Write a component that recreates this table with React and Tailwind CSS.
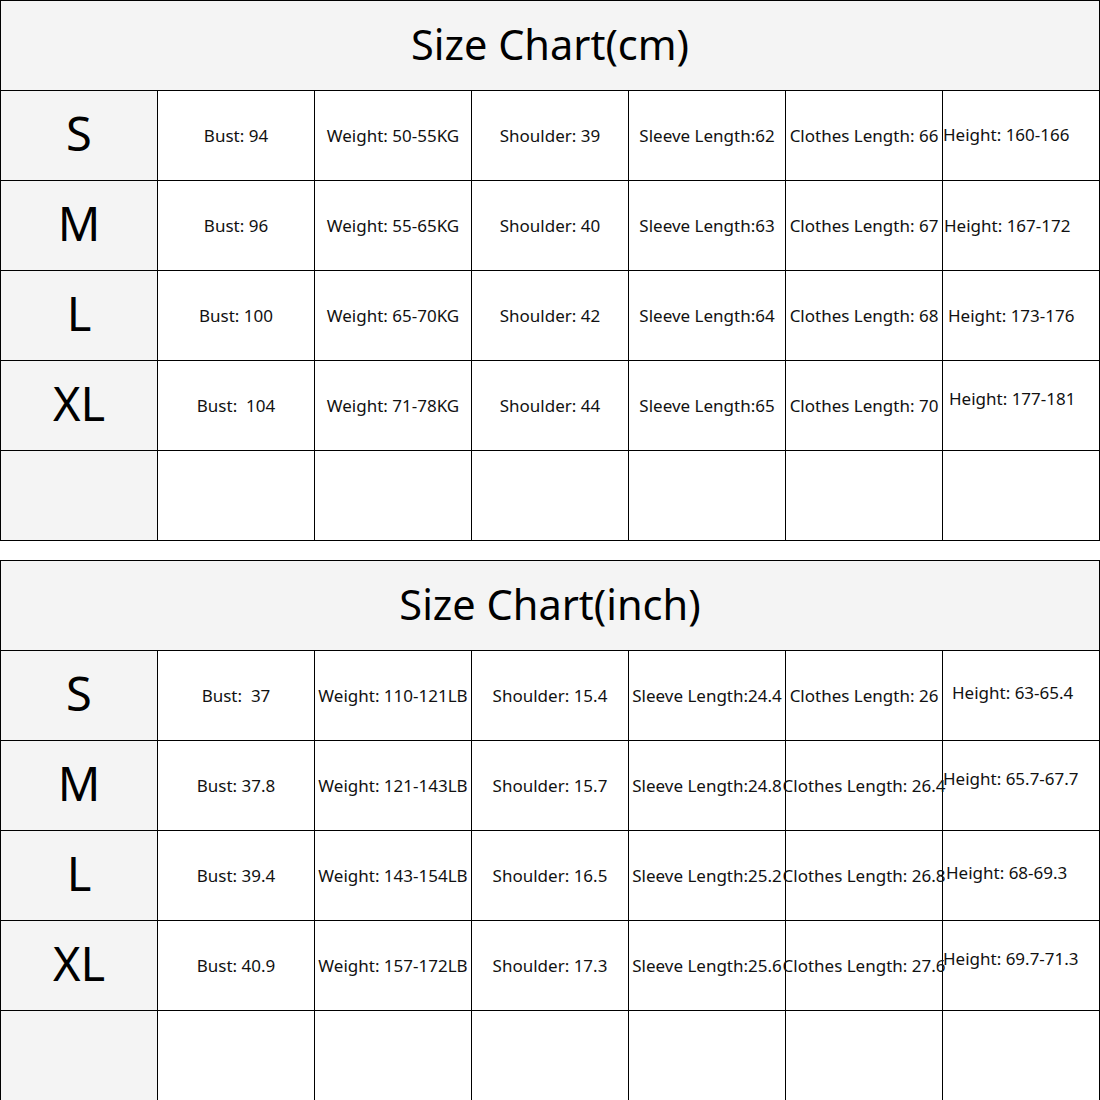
import React from 'react';

const cmRows = [
  { size: 'S', cells: ['Bust: 94', 'Weight: 50-55KG', 'Shoulder: 39', 'Sleeve Length:62', 'Clothes Length: 66'], height: 'Height: 160-166', hl: 'pl-0', ht: '-mt-[2px]' },
  { size: 'M', cells: ['Bust: 96', 'Weight: 55-65KG', 'Shoulder: 40', 'Sleeve Length:63', 'Clothes Length: 67'], height: 'Height: 167-172', hl: 'pl-[1px]', ht: 'mt-0' },
  { size: 'L', cells: ['Bust: 100', 'Weight: 65-70KG', 'Shoulder: 42', 'Sleeve Length:64', 'Clothes Length: 68'], height: 'Height: 173-176', hl: 'pl-[5px]', ht: 'mt-0' },
  { size: 'XL', cells: ['Bust:  104', 'Weight: 71-78KG', 'Shoulder: 44', 'Sleeve Length:65', 'Clothes Length: 70'], height: 'Height: 177-181', hl: 'pl-[6px]', ht: '-mt-[14px]' },
];

const inchRows = [
  { size: 'S', cells: ['Bust:  37', 'Weight: 110-121LB', 'Shoulder: 15.4', 'Sleeve Length:24.4', 'Clothes Length: 26'], height: 'Height: 63-65.4', hl: 'pl-[9px]', ht: '-mt-[6px]' },
  { size: 'M', cells: ['Bust: 37.8', 'Weight: 121-143LB', 'Shoulder: 15.7', 'Sleeve Length:24.8', 'Clothes Length: 26.4'], height: 'Height: 65.7-67.7', hl: 'pl-0', ht: '-mt-[14px]' },
  { size: 'L', cells: ['Bust: 39.4', 'Weight: 143-154LB', 'Shoulder: 16.5', 'Sleeve Length:25.2', 'Clothes Length: 26.8'], height: 'Height: 68-69.3', hl: 'pl-[3px]', ht: '-mt-[6px]' },
  { size: 'XL', cells: ['Bust: 40.9', 'Weight: 157-172LB', 'Shoulder: 17.3', 'Sleeve Length:25.6', 'Clothes Length: 27.6'], height: 'Height: 69.7-71.3', hl: 'pl-0', ht: '-mt-[14px]' },
];

function Chart({ title, rows }) {
  return (
    <div className="w-[1100px] border-t border-l border-black">
      <div className="h-[90px] bg-[#f4f4f4] border-r border-b border-black flex items-center justify-center text-[41.5px] text-black">
        <span className="-mt-[3px]">{title}</span>
      </div>
      {[...rows, null].map((row, i) => (
        <div key={i} className="grid grid-cols-[repeat(7,157px)] h-[90px]">
          <div className="bg-[#f4f4f4] border-r border-b border-black flex items-center justify-center text-[47px] text-black">
            <span className="-mt-[4px]">{row ? row.size : ''}</span>
          </div>
          {(row ? row.cells : ['', '', '', '', '']).map((c, j) => (
            <div key={j} className="border-r border-b border-black flex items-center justify-center whitespace-pre text-[17px] text-[#111]">
              <span className="mt-[1px]">{c}</span>
            </div>
          ))}
          <div className="border-r border-b border-black flex items-center whitespace-pre text-[17px] text-[#111]">
            {row ? <span className={`${row.hl} ${row.ht}`}>{row.height}</span> : ''}
          </div>
        </div>
      ))}
    </div>
  );
}

export default function App() {
  return (
    <div className="bg-white w-[1100px] h-[1100px] overflow-hidden font-['Noto_Sans',sans-serif] flex flex-col gap-[19px]">
      <Chart title="Size Chart(cm)" rows={cmRows} />
      <Chart title="Size Chart(inch)" rows={inchRows} />
    </div>
  );
}
